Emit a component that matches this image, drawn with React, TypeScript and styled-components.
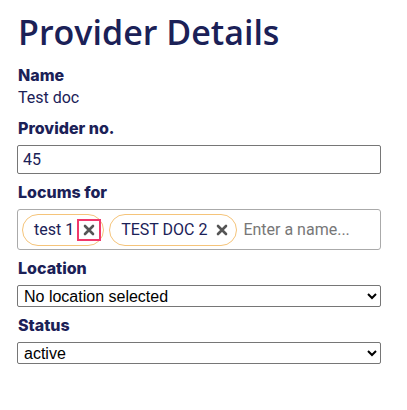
import React from 'react';
import styled, {createGlobalStyle} from 'styled-components';

const navy = '#1b2157';

const GlobalStyle = createGlobalStyle`
  body {
    margin: 0;
    background: #ffffff;
    font-family: Roboto, "Noto Sans", sans-serif;
    color: ${navy};
  }
`;

const Page = styled.div`
  padding: 0 26px 0 17px;
  display: flex;
  flex-direction: column;
`;

const Title = styled.h1`
  margin: 7px 0 0 1px;
  height: 50px;
  font-family: "Open Sans", sans-serif;
  font-weight: 600;
  font-size: 34px;
  line-height: 50px;
  color: ${navy};
`;

const Label = styled.div`
  margin: 8px 0 7px 1px;
  font-family: Inter, sans-serif;
  font-size: 16px;
  line-height: 20px;
  font-weight: 800;
  color: ${navy};
`;

const Value = styled.div`
  margin: -6px 0 0 1px;
  font-size: 16px;
  line-height: 24px;
  color: ${navy};
`;

const TextInput = styled.input`
  box-sizing: border-box;
  width: 100%;
  height: 29px;
  margin: 0;
  padding: 0 5px;
  border: 1px solid #767676;
  border-radius: 2px;
  font-family: Roboto, sans-serif;
  font-size: 16px;
  color: ${navy};
  background: #fff;
`;

const TagBox = styled.div`
  box-sizing: border-box;
  height: 41px;
  display: flex;
  align-items: center;
  gap: 5px;
  padding: 0 4px;
  border: 1px solid #aaaaaa;
  border-radius: 3px;
`;

const Tag = styled.span`
  box-sizing: border-box;
  height: 32px;
  display: inline-flex;
  align-items: center;
  gap: 3px;
  padding: 0 2px 0 11px;
  border: 1px solid #f5c47a;
  border-radius: 16px;
  font-size: 16px;
  color: ${navy};
`;

const Remove = styled.button<{$focused?: boolean}>`
  box-sizing: border-box;
  width: 24px;
  height: 22px;
  padding: 0;
  display: flex;
  align-items: center;
  justify-content: center;
  background: none;
  border: 2px solid ${p => (p.$focused ? '#f0386b' : 'transparent')};
  color: #555555;
  cursor: pointer;
`;

const NameInput = styled.input`
  flex: 1;
  min-width: 0;
  border: none;
  outline: none;
  padding: 0 0 0 1px;
  font-family: Roboto, sans-serif;
  font-size: 16px;
  color: ${navy};
  &::placeholder {
    color: #777777;
  }
`;

const Select = styled.select`
  box-sizing: border-box;
  width: 100%;
  height: 22px;
  margin: 0;
  padding: 0 2px;
  border: 1px solid #767676;
  border-radius: 2px;
  background: #fff;
  font-family: "Liberation Sans", Arial, sans-serif;
  font-size: 16px;
  color: #000;
`;

const Cross = () => (
  <svg width="12" height="12" viewBox="0 0 12 12">
    <path d="M2 2 L10 10 M10 2 L2 10" stroke="currentColor" strokeWidth="2.6" strokeLinecap="round" />
  </svg>
);

export default function App() {
  return (
    <>
      <GlobalStyle />
      <Page>
        <Title>Provider Details</Title>
        <Label>Name</Label>
        <Value>Test doc</Value>
        <Label>Provider no.</Label>
        <TextInput defaultValue="45" />
        <Label>Locums for</Label>
        <TagBox>
          <Tag>
            test 1
            <Remove $focused aria-label="Remove test 1">
              <Cross />
            </Remove>
          </Tag>
          <Tag>
            TEST DOC 2
            <Remove aria-label="Remove TEST DOC 2">
              <Cross />
            </Remove>
          </Tag>
          <NameInput placeholder="Enter a name..." />
        </TagBox>
        <Label>Location</Label>
        <Select defaultValue="none">
          <option value="none">No location selected</option>
        </Select>
        <Label>Status</Label>
        <Select defaultValue="active">
          <option value="active">active</option>
        </Select>
      </Page>
    </>
  );
}
